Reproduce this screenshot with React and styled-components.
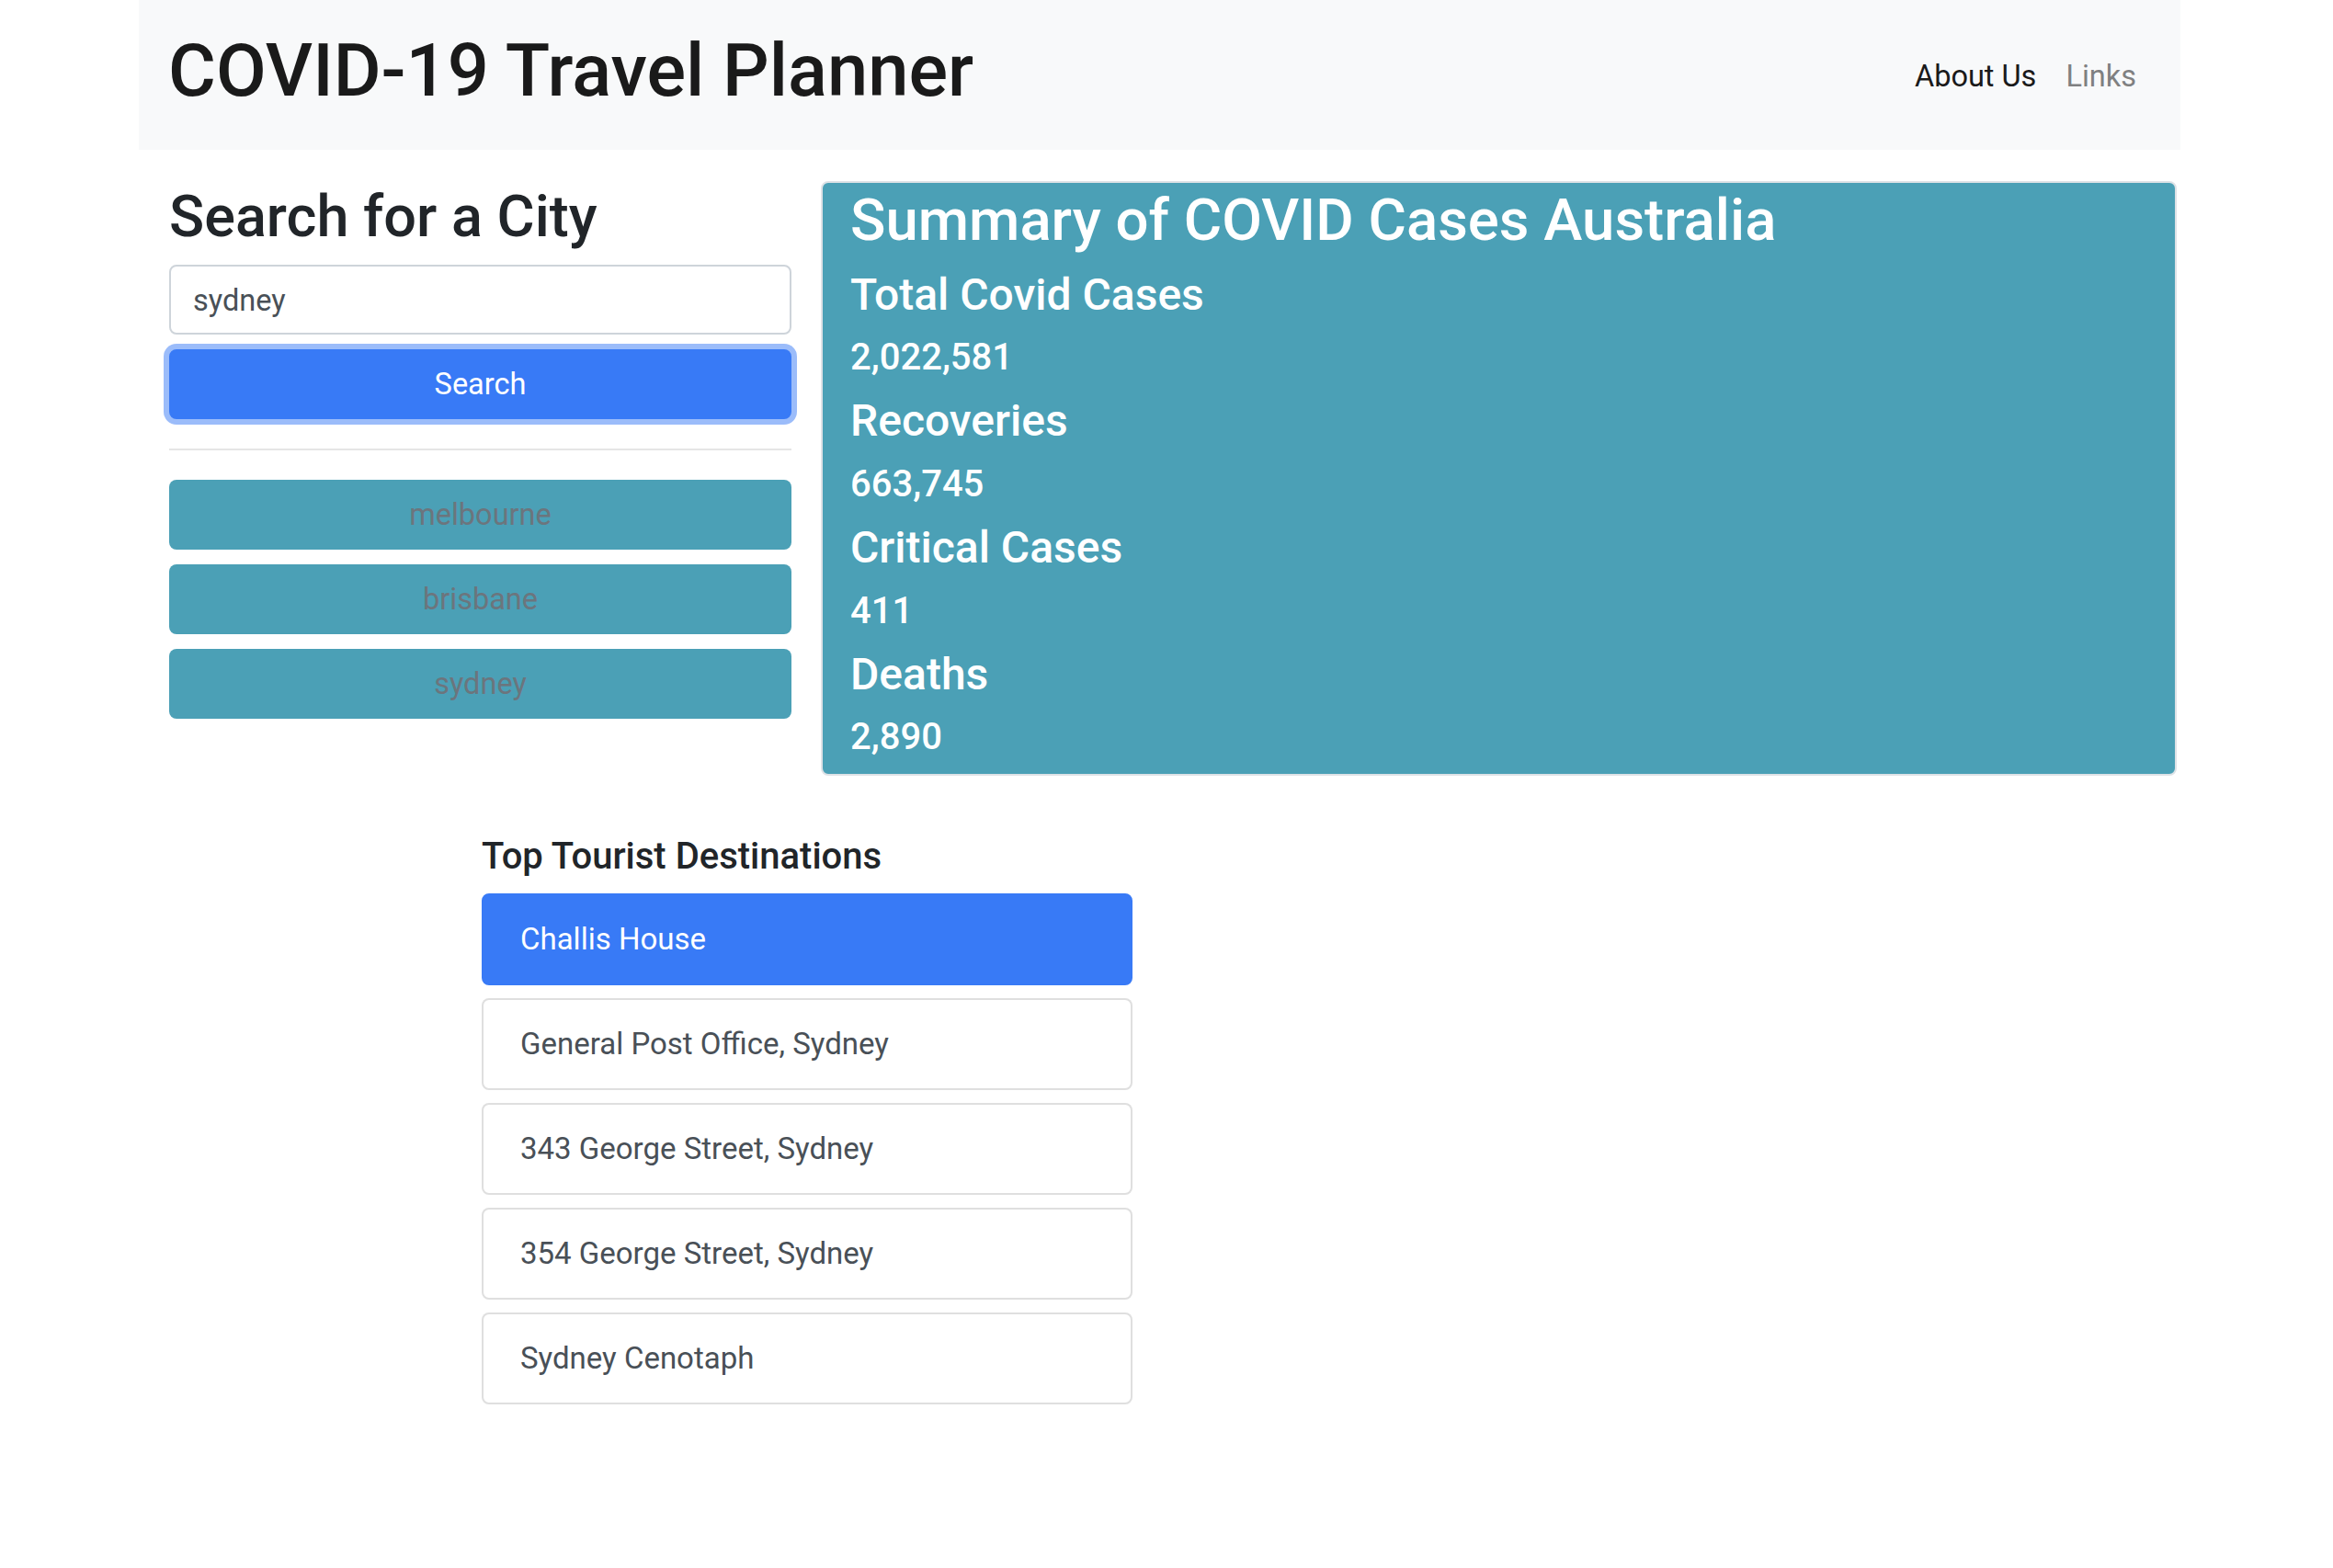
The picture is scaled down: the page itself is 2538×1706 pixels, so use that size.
import React from "react";
import styled, { createGlobalStyle } from "styled-components";

const cities = ["melbourne", "brisbane", "sydney"];

const stats = [
  { label: "Total Covid Cases", value: "2,022,581" },
  { label: "Recoveries", value: "663,745" },
  { label: "Critical Cases", value: "411" },
  { label: "Deaths", value: "2,890" },
];

const destinations = [
  "Challis House",
  "General Post Office, Sydney",
  "343 George Street, Sydney",
  "354 George Street, Sydney",
  "Sydney Cenotaph",
];

export default function App() {
  return (
    <>
      <GlobalStyle />
      <Page>
        <Navbar>
          <Brand>COVID-19 Travel Planner</Brand>
          <NavLinks>
            <NavLink $active>About Us</NavLink>
            <NavLink>Links</NavLink>
          </NavLinks>
        </Navbar>

        <Row>
          <SearchColumn>
            <Heading>Search for a City</Heading>
            <SearchInput type="text" defaultValue="sydney" />
            <PrimaryButton>Search</PrimaryButton>
            <Divider />
            <CityList>
              {cities.map((city) => (
                <CityButton key={city}>{city}</CityButton>
              ))}
            </CityList>
          </SearchColumn>

          <SummaryCard>
            <CardTitle>Summary of COVID Cases Australia</CardTitle>
            {stats.map((s) => (
              <React.Fragment key={s.label}>
                <StatLabel>{s.label}</StatLabel>
                <StatValue>{s.value}</StatValue>
              </React.Fragment>
            ))}
          </SummaryCard>
        </Row>

        <Destinations>
          <SectionTitle>Top Tourist Destinations</SectionTitle>
          <DestList>
            {destinations.map((d, i) => (
              <DestItem key={d} $active={i === 0}>
                {d}
              </DestItem>
            ))}
          </DestList>
        </Destinations>
      </Page>
    </>
  );
}

const GlobalStyle = createGlobalStyle`
  body {
    margin: 0;
    background: #fff;
    color: #212529;
    font-family: Roboto, "Helvetica Neue", Arial, sans-serif;
  }
`;

const Page = styled.div`
  width: 2221px;
  margin-left: 151px;
  padding-bottom: 120px;
`;

const Navbar = styled.nav`
  display: flex;
  justify-content: space-between;
  align-items: flex-start;
  box-sizing: border-box;
  height: 163px;
  padding: 29px 32px 0;
  background: #f8f9fa;
`;

const Brand = styled.h1`
  margin: 0;
  font-size: 79.5px;
  font-weight: 500;
  line-height: 96px;
  color: #1a1a1a;
`;

const NavLinks = styled.div`
  display: flex;
  margin-top: 30px;
`;

const NavLink = styled.a`
  padding: 0 16px;
  font-size: 32.5px;
  line-height: 48px;
  color: ${(p) => (p.$active ? "#1a1a1a" : "#7f8081")};
  cursor: pointer;
`;

const Row = styled.div`
  display: flex;
  align-items: flex-start;
  gap: 32px;
  margin-top: 34px;
  padding: 0 4px 0 33px;
`;

const SearchColumn = styled.div`
  flex: none;
  width: 677px;
  display: flex;
  flex-direction: column;
`;

const Heading = styled.h2`
  margin: 1px 0 13px;
  font-size: 63px;
  font-weight: 500;
  line-height: 76.8px;
  color: #212529;
`;

const SearchInput = styled.input`
  box-sizing: border-box;
  width: 100%;
  height: 76px;
  padding: 2px 24px 0;
  border: 2px solid #ced4da;
  border-radius: 8px;
  font-family: Roboto, sans-serif;
  font-size: 32.5px;
  color: #495057;
  outline: none;
`;

const PrimaryButton = styled.button`
  height: 76px;
  margin-top: 16px;
  background: #387af6;
  border: 2px solid #387af6;
  border-radius: 8px;
  box-shadow: 0 0 0 6px rgba(56, 122, 246, 0.5);
  color: #fff;
  font-family: Roboto, sans-serif;
  font-size: 32.5px;
  cursor: pointer;
`;

const Divider = styled.hr`
  width: 100%;
  margin: 32px 0;
  border: 0;
  border-top: 2px solid rgba(0, 0, 0, 0.1);
`;

const CityList = styled.div`
  display: flex;
  flex-direction: column;
  gap: 16px;
`;

const CityButton = styled.button`
  height: 76px;
  background: #4ba0b6;
  border: none;
  border-radius: 8px;
  color: #6c757d;
  font-family: Roboto, sans-serif;
  font-size: 32.5px;
  cursor: pointer;
`;

const SummaryCard = styled.div`
  flex: 1;
  padding: 3px 30px 0;
  background: #4ba0b6;
  border: 2px solid #dee2e6;
  border-radius: 8px;
  color: #fff;
`;

const CardTitle = styled.h2`
  margin: 0 0 13px;
  font-size: 63.5px;
  font-weight: 500;
  line-height: 76.8px;
`;

const StatLabel = styled.h4`
  margin: 0 0 16px;
  font-size: 48px;
  font-weight: 500;
  line-height: 57.6px;
`;

const StatValue = styled.h5`
  margin: 0 0 16px;
  font-size: 40px;
  font-weight: 500;
  line-height: 48px;
`;

const Destinations = styled.section`
  width: 708px;
  margin: 64px 0 0 373px;
`;

const SectionTitle = styled.h5`
  margin: 0 0 16px;
  font-size: 40px;
  font-weight: 500;
  line-height: 48px;
  color: #212529;
`;

const DestList = styled.div`
  display: flex;
  flex-direction: column;
  gap: 14px;
`;

const DestItem = styled.div`
  box-sizing: border-box;
  height: 100px;
  padding: 24px 40px;
  border: 2px solid ${(p) => (p.$active ? "#387af6" : "rgba(0, 0, 0, 0.125)")};
  border-radius: 8px;
  background: ${(p) => (p.$active ? "#387af6" : "#fff")};
  color: ${(p) => (p.$active ? "#fff" : "#495057")};
  font-size: 33px;
  line-height: 48px;
`;
